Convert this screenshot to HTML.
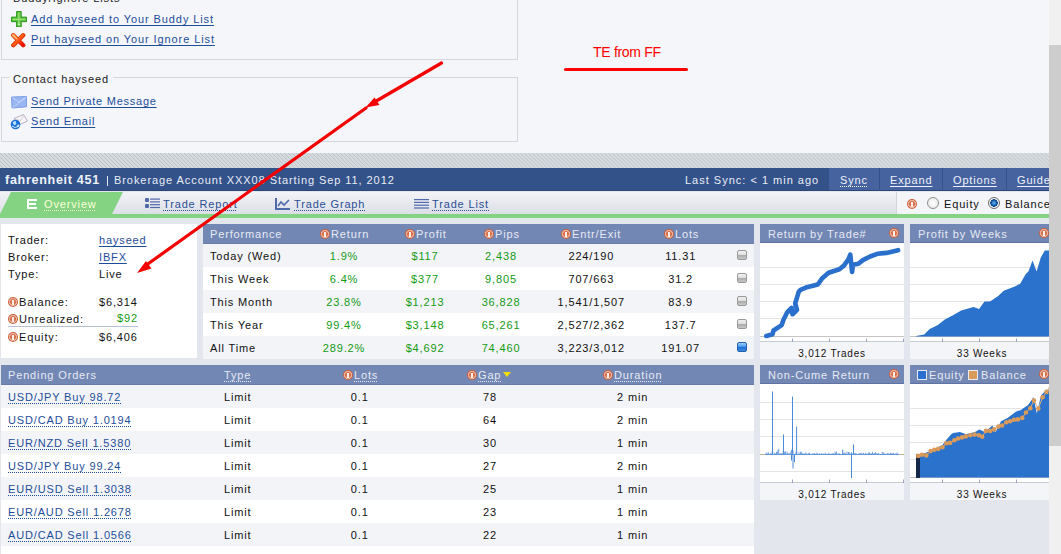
<!DOCTYPE html><html><head><meta charset="utf-8"><style>
*{margin:0;padding:0;box-sizing:border-box}
html,body{width:1061px;height:554px;overflow:hidden;background:#f5f6fa;font-family:"Liberation Sans",sans-serif;position:relative}
.a{position:absolute;white-space:nowrap}
.c{position:absolute;white-space:nowrap;transform:translateX(-50%)}
.lnk{color:#1e4e9a;text-decoration:underline;text-decoration-thickness:1px;text-underline-offset:1.5px;text-decoration-skip-ink:none}
.fs{position:absolute;border:1px solid #d3d7df}
.t11{font-size:11px;line-height:13px;letter-spacing:0.9px}
.t12{font-size:11px;line-height:13px;letter-spacing:0.85px}
.t10{font-size:10px;line-height:12px;letter-spacing:0.75px}
.dot{text-decoration:underline dotted;text-decoration-thickness:1px;text-underline-offset:2px;text-decoration-skip-ink:none}
.hdr{position:absolute;background:#7387b5;color:#e6eaf4}
.info{position:absolute;width:10px;height:10px;border-radius:50%;background:radial-gradient(circle,#d4704e 0,#d4704e 2.6px,#eab29c 3.2px,#eab29c 3.8px,#c9603c 4.4px)}
.info:after{content:"";position:absolute;left:4.2px;top:2.5px;width:1.6px;height:4.5px;background:#fbeee8}
.info:before{content:"";position:absolute;left:3.6px;top:6.5px;width:2.8px;height:1.6px;border-radius:1px;background:#fff}
.g{color:#139a13}
.k{color:#111}
</style></head><body>
<div class="fs" style="left:1px;top:-20px;width:517px;height:80px"></div>
<div id="buddy" class="a t11" style="left:9px;top:-8px;padding:0 4px;background:#f5f6fa;color:#222;">Buddy/Ignore Lists</div>
<div class="fs" style="left:1px;top:77px;width:517px;height:65px"></div>
<div id="contact" class="a t11" style="left:9px;top:73px;padding:0 4px;background:#f5f6fa;color:#222;">Contact hayseed</div>
<div id="l1" class="a t11 lnk" style="left:31px;top:13px">Add hayseed to Your Buddy List</div>
<div id="l2" class="a t11 lnk" style="left:31px;top:33px">Put hayseed on Your Ignore List</div>
<div id="l3" class="a t11 lnk" style="left:31px;top:95px;letter-spacing:0.75px">Send Private Message</div>
<div id="l4" class="a t11 lnk" style="left:31px;top:115px;letter-spacing:0.8px">Send Email</div>
<svg class="a" style="left:11px;top:11px" width="16" height="16" viewBox="0 0 16 16">
<path d="M5.6 0.5h4.6v5.6h5.3v4.6h-5.3v5.3h-4.6v-5.3H0.5v-4.6h5.1z" fill="#5cc43e" stroke="#2e961f" stroke-width="1"/>
<path d="M7.9 1.5v13M1.5 8.4h13" stroke="#9fe07e" stroke-width="1.2"/>
<rect x="7.2" y="12.6" width="1.5" height="1.5" fill="#e8ffd8"/></svg>
<svg class="a" style="left:10px;top:31.5px" width="16" height="16" viewBox="0 0 16 16">
<defs><linearGradient id="xg" x1="0" y1="0" x2="1" y2="1"><stop offset="0" stop-color="#ff9a40"/><stop offset="0.5" stop-color="#ff5a18"/><stop offset="1" stop-color="#f00000"/></linearGradient></defs>
<path d="M3.3 3.3L13.2 13.2M13.2 3.3L3.3 13.2" stroke="#d83000" stroke-width="4.4" stroke-linecap="round"/>
<path d="M3.3 3.3L13.2 13.2M13.2 3.3L3.3 13.2" stroke="url(#xg)" stroke-width="2.8" stroke-linecap="round"/>
<path d="M3 3L6.5 6.5" stroke="#ffc080" stroke-width="1.4" stroke-linecap="round"/></svg>
<svg class="a" style="left:11px;top:96px" width="16" height="13" viewBox="0 0 16 13">
<path d="M0.5 1L15.5 0.5V10.8L1 12Z" fill="#98b6f2" stroke="#7e9ee6" stroke-width="1"/>
<path d="M1.5 1.5L8 6L15 1M1.5 11.5L14.5 2" fill="none" stroke="#c4d6fa" stroke-width="0.9"/></svg>
<svg class="a" style="left:10px;top:113px" width="18" height="17" viewBox="0 0 18 17">
<path d="M4 5.5L13.5 1.5L17.5 8L8.5 12Z" fill="#f6f6f8" stroke="#b4a8b8" stroke-width="0.9"/>
<path d="M4.5 6L11 7.5L13.5 2" fill="none" stroke="#c8c0cc" stroke-width="0.7"/>
<circle cx="5.5" cy="11.5" r="4.8" fill="#1c6ed8"/>
<path d="M2.5 9.5q1.5-2 3.5-1.5q-1 1.5 0.5 2.5q-1 2-2.5 1.5zM7 12q1.5-1 2.5 0q-0.5 2-2 2.5z" fill="#bfe6ff"/>
<path d="M2 13q3 3 7 0" stroke="#d8f0ff" stroke-width="1" fill="none"/></svg>
<div id="te" class="a" style="left:593px;top:44px;font-size:14px;line-height:16px;color:#f00;letter-spacing:-0.3px">TE from FF</div>
<div class="a" style="left:564px;top:68px;width:124px;height:3px;background:#f00;border-radius:2px"></div>
<div class="a" style="left:0;top:153px;width:1061px;height:401px;background:#e4e6ed"></div>
<div class="a" style="left:0;top:153px;width:1061px;height:15px;background:repeating-linear-gradient(45deg,#d6dbe0 0px,#d6dbe0 1.6px,#b9c0c6 2.1px,#d6dbe0 2.83px)"></div>
<div class="a" style="left:0;top:168px;width:1061px;height:23px;background:#34528a;border-bottom:1px solid #2b4575"></div>
<div id="fh" class="a" style="left:5px;top:173px;font-size:12.5px;line-height:14px;font-weight:bold;color:#eef2fa;letter-spacing:0.72px">fahrenheit 451</div>
<div class="a" style="left:107px;top:176px;width:1px;height:10px;background:#dfe6f4"></div>
<div id="brk" class="a t12" style="left:114px;top:174px;color:#e8edf7;letter-spacing:0.93px">Brokerage Account XXX08 Starting Sep 11, 2012</div>
<div id="sync0" class="a t12" style="left:685px;top:174px;color:#e8edf7;letter-spacing:1.0px">Last Sync: &lt; 1 min ago</div>
<div class="a" style="left:829px;top:168px;width:220px;height:23px;background:#4663a0;border-bottom:1px solid #2b4575"></div>
<div class="a" style="left:879px;top:168px;width:1px;height:23px;background:#34528a"></div>
<div class="a" style="left:942px;top:168px;width:1px;height:23px;background:#34528a"></div>
<div class="a" style="left:1006px;top:168px;width:1px;height:23px;background:#34528a"></div>
<div id="syncb" class="a t12 dot" style="left:840px;top:174px;color:#eef2fa">Sync</div>
<div id="exp" class="a t12" style="left:890px;top:174px;color:#eef2fa;text-decoration:underline;text-underline-offset:2px">Expand</div>
<div id="opt" class="a t12" style="left:953px;top:174px;color:#eef2fa;text-decoration:underline;text-underline-offset:2px">Options</div>
<div id="gui" class="a t12" style="left:1017px;top:174px;color:#eef2fa;text-decoration:underline;text-underline-offset:2px">Guide</div>
<div class="a" style="left:0;top:192px;width:1061px;height:22px;background:linear-gradient(#f2f3f7,#dcdfe7)"></div>
<svg class="a" style="left:0;top:192px" width="130" height="22"><path d="M11 0H123L112 22H0Z" fill="#83d383"/></svg>
<div class="a" style="left:0;top:214px;width:1061px;height:4px;background:#83d383"></div>
<svg class="a" style="left:27px;top:199px" width="11" height="10"><path d="M0 0h10v2H2v2h7v2H2v2h8v2H0z" fill="#fff"/></svg>
<div id="ov" class="a t12 dot" style="left:44px;top:198px;color:#fbffd6">Overview</div>
<svg class="a" style="left:145px;top:198px" width="15" height="11"><g fill="#5069a8"><rect x="0" y="0" width="4" height="4" rx="1"/><rect x="0" y="6" width="4" height="4" rx="1"/>
<rect x="5" y="0.5" width="10" height="1.2"/><rect x="5" y="3.3" width="10" height="1.2"/><rect x="5" y="6.1" width="10" height="1.2"/><rect x="5" y="8.9" width="10" height="1.2"/></g></svg>
<div id="tr" class="a t12 dot" style="left:163px;top:198px;color:#2a4d94">Trade Report</div>
<svg class="a" style="left:275px;top:198px" width="16" height="12"><path d="M1 0V11H15" fill="none" stroke="#5069a8" stroke-width="2"/><path d="M3 8L6 4L9 7L14 2" fill="none" stroke="#5069a8" stroke-width="1.6"/></svg>
<div id="tg" class="a t12 dot" style="left:294px;top:198px;color:#2a4d94">Trade Graph</div>
<svg class="a" style="left:414px;top:199px" width="15" height="10"><g fill="#5069a8"><rect x="0" y="0" width="15" height="1.2"/><rect x="0" y="2.8" width="15" height="1.2"/><rect x="0" y="5.6" width="15" height="1.2"/><rect x="0" y="8.4" width="15" height="1.2"/></g></svg>
<div id="tl" class="a t12 dot" style="left:432px;top:198px;color:#2a4d94">Trade List</div>
<div class="a" style="left:896px;top:192px;width:165px;height:22px;background:#f4f5f9;border-left:1px solid #d0d4dd"></div>
<div class="info" style="left:907px;top:199px"></div>
<div class="a" style="left:927px;top:197px;width:12px;height:12px;border-radius:50%;border:1px solid #8e8e8e;background:radial-gradient(#fff,#e4e4e4)"></div>
<div id="eq" class="a t12" style="left:944px;top:198px;color:#111">Equity</div>
<div class="a" style="left:988px;top:197px;width:12px;height:12px;border-radius:50%;border:1px solid #6b6b6b;background:radial-gradient(circle,#6fb8f2 0,#1460b0 2.5px,#0a3e80 3.5px,#fff 4px,#e4e4e4 6px)"></div>
<div id="bal" class="a t12" style="left:1005px;top:198px;color:#111">Balance</div>
<div class="a" style="left:1px;top:224px;width:196px;height:134px;background:#fff"></div>
<div id="trd" class="a t12 k" style="left:8px;top:234px;">Trader:</div>
<div id="hay" class="a t12 lnk" style="left:99px;top:234px;">hayseed</div>
<div id="brkr" class="a t12 k" style="left:8px;top:251px;">Broker:</div>
<div id="ibfx" class="a t12 lnk" style="left:99px;top:251px;">IBFX</div>
<div id="typ" class="a t12 k" style="left:8px;top:268px;">Type:</div>
<div id="live" class="a t12 k" style="left:99px;top:268px;">Live</div>
<div class="info" style="left:8px;top:297px"></div>
<div id="balc" class="a t12 k" style="left:19px;top:296px;">Balance:</div>
<div id="b1" class="a t12 k" style="left:99px;top:296px;">$6,314</div>
<div class="info" style="left:8px;top:314px"></div>
<div id="unr" class="a t12 k" style="left:19px;top:313px;">Unrealized:</div>
<div id="b2" class="a t12 g" style="left:96px;width:42px;text-align:right;top:312px">$92</div>
<div class="a" style="left:8px;top:326px;width:130px;height:1px;background:#b7c0d6"></div>
<div class="info" style="left:8px;top:332px"></div>
<div id="eqc" class="a t12 k" style="left:19px;top:331px;">Equity:</div>
<div id="b3" class="a t12 k" style="left:99px;top:331px;">$6,406</div>
<div class="hdr" style="left:203px;top:224px;width:551px;height:20px;border-bottom:1px solid #6a7cab"></div>
<div id="perf" class="a t12" style="left:210px;top:228px;color:#e6eaf4">Performance</div>
<div class="info" style="left:320px;top:229px"></div>
<div id="ph0" class="a t12" style="left:331px;top:228px;color:#e6eaf4">Return</div>
<div class="info" style="left:405px;top:229px"></div>
<div id="ph1" class="a t12" style="left:416px;top:228px;color:#e6eaf4">Profit</div>
<div class="info" style="left:484px;top:229px"></div>
<div id="ph2" class="a t12" style="left:495px;top:228px;color:#e6eaf4">Pips</div>
<div class="info" style="left:561px;top:229px"></div>
<div id="ph3" class="a t12" style="left:572px;top:228px;color:#e6eaf4">Entr/Exit</div>
<div class="info" style="left:664px;top:229px"></div>
<div id="ph4" class="a t12" style="left:675px;top:228px;color:#e6eaf4">Lots</div>
<div class="a" style="left:203px;top:244px;width:551px;height:23px;background:#f3f4f8"></div>
<div id="pr0" class="a t12 k" style="left:210px;top:250px;">Today (Wed)</div>
<div id="pc00" class="c t12 g" style="left:344px;top:250px">1.9%</div>
<div id="pc01" class="c t12 g" style="left:425px;top:250px">$117</div>
<div id="pc02" class="c t12 g" style="left:501px;top:250px">2,438</div>
<div id="pc03" class="c t12 k" style="left:591.3px;top:250px">224/190</div>
<div id="pc04" class="c t12 k" style="left:680.7px;top:250px">11.31</div>
<div class="a" style="left:737px;top:250px;width:10px;height:10px;border:1px solid #9a9a9a;border-radius:2px;background:linear-gradient(#f0f0f0 0,#e0e0e0 45%,#a8a8a8 50%,#c8c8c8 100%)"></div>
<div class="a" style="left:203px;top:267px;width:551px;height:23px;background:#ffffff"></div>
<div id="pr1" class="a t12 k" style="left:210px;top:273px;">This Week</div>
<div id="pc10" class="c t12 g" style="left:344px;top:273px">6.4%</div>
<div id="pc11" class="c t12 g" style="left:425px;top:273px">$377</div>
<div id="pc12" class="c t12 g" style="left:501px;top:273px">9,805</div>
<div id="pc13" class="c t12 k" style="left:591.3px;top:273px">707/663</div>
<div id="pc14" class="c t12 k" style="left:680.7px;top:273px">31.2</div>
<div class="a" style="left:737px;top:273px;width:10px;height:10px;border:1px solid #9a9a9a;border-radius:2px;background:linear-gradient(#f0f0f0 0,#e0e0e0 45%,#a8a8a8 50%,#c8c8c8 100%)"></div>
<div class="a" style="left:203px;top:290px;width:551px;height:23px;background:#f3f4f8"></div>
<div id="pr2" class="a t12 k" style="left:210px;top:296px;">This Month</div>
<div id="pc20" class="c t12 g" style="left:344px;top:296px">23.8%</div>
<div id="pc21" class="c t12 g" style="left:425px;top:296px">$1,213</div>
<div id="pc22" class="c t12 g" style="left:501px;top:296px">36,828</div>
<div id="pc23" class="c t12 k" style="left:591.3px;top:296px">1,541/1,507</div>
<div id="pc24" class="c t12 k" style="left:680.7px;top:296px">83.9</div>
<div class="a" style="left:737px;top:296px;width:10px;height:10px;border:1px solid #9a9a9a;border-radius:2px;background:linear-gradient(#f0f0f0 0,#e0e0e0 45%,#a8a8a8 50%,#c8c8c8 100%)"></div>
<div class="a" style="left:203px;top:313px;width:551px;height:23px;background:#ffffff"></div>
<div id="pr3" class="a t12 k" style="left:210px;top:319px;">This Year</div>
<div id="pc30" class="c t12 g" style="left:344px;top:319px">99.4%</div>
<div id="pc31" class="c t12 g" style="left:425px;top:319px">$3,148</div>
<div id="pc32" class="c t12 g" style="left:501px;top:319px">65,261</div>
<div id="pc33" class="c t12 k" style="left:591.3px;top:319px">2,527/2,362</div>
<div id="pc34" class="c t12 k" style="left:680.7px;top:319px">137.7</div>
<div class="a" style="left:737px;top:319px;width:10px;height:10px;border:1px solid #9a9a9a;border-radius:2px;background:linear-gradient(#f0f0f0 0,#e0e0e0 45%,#a8a8a8 50%,#c8c8c8 100%)"></div>
<div class="a" style="left:203px;top:336px;width:551px;height:23px;background:#f3f4f8"></div>
<div id="pr4" class="a t12 k" style="left:210px;top:342px;">All Time</div>
<div id="pc40" class="c t12 g" style="left:344px;top:342px">289.2%</div>
<div id="pc41" class="c t12 g" style="left:425px;top:342px">$4,692</div>
<div id="pc42" class="c t12 g" style="left:501px;top:342px">74,460</div>
<div id="pc43" class="c t12 k" style="left:591.3px;top:342px">3,223/3,012</div>
<div id="pc44" class="c t12 k" style="left:680.7px;top:342px">191.07</div>
<div class="a" style="left:737px;top:342px;width:10px;height:10px;border:1px solid #2560b0;border-radius:2px;background:linear-gradient(#9fd0ff 0,#4a98ee 45%,#1c6cd0 50%,#3a8ae0 100%)"></div>
<div class="hdr" style="left:1px;top:365px;width:753px;height:20px;border-bottom:1px solid #6a7cab"></div>
<div id="pend" class="a t12" style="left:8px;top:369px;color:#e6eaf4">Pending Orders</div>
<div id="ptype" class="a t12 dot" style="left:224px;top:369px;color:#e6eaf4">Type</div>
<div class="info" style="left:343px;top:370px"></div>
<div id="plots" class="a t12 dot" style="left:354px;top:369px;color:#e6eaf4">Lots</div>
<div class="info" style="left:467px;top:370px"></div>
<div id="pgap" class="a t12 dot" style="left:478px;top:369px;color:#e6eaf4">Gap</div>
<svg class="a" style="left:503px;top:372px" width="8" height="5"><path d="M0 0H8L4 5Z" fill="#f0e000"/></svg>
<div class="info" style="left:603px;top:370px"></div>
<div id="pdur" class="a t12 dot" style="left:614px;top:369px;color:#e6eaf4">Duration</div>
<div class="a" style="left:1px;top:385px;width:753px;height:23px;background:#f3f4f8"></div>
<div id="po0" class="a t12 dot" style="left:8px;top:391px;color:#1e4e9a">USD/JPY Buy 98.72</div>
<div id="pl0" class="a t12 k" style="left:224px;top:391px;">Limit</div>
<div id="pq0" class="c t12 k" style="left:359.7px;top:391px">0.1</div>
<div id="pg0" class="c t12 k" style="left:489.9px;top:391px">78</div>
<div id="pd0" class="c t12 k" style="left:632.6px;top:391px">2 min</div>
<div class="a" style="left:1px;top:408px;width:753px;height:23px;background:#ffffff"></div>
<div id="po1" class="a t12 dot" style="left:8px;top:414px;color:#1e4e9a">USD/CAD Buy 1.0194</div>
<div id="pl1" class="a t12 k" style="left:224px;top:414px;">Limit</div>
<div id="pq1" class="c t12 k" style="left:359.7px;top:414px">0.1</div>
<div id="pg1" class="c t12 k" style="left:489.9px;top:414px">64</div>
<div id="pd1" class="c t12 k" style="left:632.6px;top:414px">2 min</div>
<div class="a" style="left:1px;top:431px;width:753px;height:23px;background:#f3f4f8"></div>
<div id="po2" class="a t12 dot" style="left:8px;top:437px;color:#1e4e9a">EUR/NZD Sell 1.5380</div>
<div id="pl2" class="a t12 k" style="left:224px;top:437px;">Limit</div>
<div id="pq2" class="c t12 k" style="left:359.7px;top:437px">0.1</div>
<div id="pg2" class="c t12 k" style="left:489.9px;top:437px">30</div>
<div id="pd2" class="c t12 k" style="left:632.6px;top:437px">1 min</div>
<div class="a" style="left:1px;top:454px;width:753px;height:23px;background:#ffffff"></div>
<div id="po3" class="a t12 dot" style="left:8px;top:460px;color:#1e4e9a">USD/JPY Buy 99.24</div>
<div id="pl3" class="a t12 k" style="left:224px;top:460px;">Limit</div>
<div id="pq3" class="c t12 k" style="left:359.7px;top:460px">0.1</div>
<div id="pg3" class="c t12 k" style="left:489.9px;top:460px">27</div>
<div id="pd3" class="c t12 k" style="left:632.6px;top:460px">2 min</div>
<div class="a" style="left:1px;top:477px;width:753px;height:23px;background:#f3f4f8"></div>
<div id="po4" class="a t12 dot" style="left:8px;top:483px;color:#1e4e9a">EUR/USD Sell 1.3038</div>
<div id="pl4" class="a t12 k" style="left:224px;top:483px;">Limit</div>
<div id="pq4" class="c t12 k" style="left:359.7px;top:483px">0.1</div>
<div id="pg4" class="c t12 k" style="left:489.9px;top:483px">25</div>
<div id="pd4" class="c t12 k" style="left:632.6px;top:483px">1 min</div>
<div class="a" style="left:1px;top:500px;width:753px;height:23px;background:#ffffff"></div>
<div id="po5" class="a t12 dot" style="left:8px;top:506px;color:#1e4e9a">EUR/AUD Sell 1.2678</div>
<div id="pl5" class="a t12 k" style="left:224px;top:506px;">Limit</div>
<div id="pq5" class="c t12 k" style="left:359.7px;top:506px">0.1</div>
<div id="pg5" class="c t12 k" style="left:489.9px;top:506px">23</div>
<div id="pd5" class="c t12 k" style="left:632.6px;top:506px">1 min</div>
<div class="a" style="left:1px;top:523px;width:753px;height:23px;background:#f3f4f8"></div>
<div id="po6" class="a t12 dot" style="left:8px;top:529px;color:#1e4e9a">AUD/CAD Sell 1.0566</div>
<div id="pl6" class="a t12 k" style="left:224px;top:529px;">Limit</div>
<div id="pq6" class="c t12 k" style="left:359.7px;top:529px">0.1</div>
<div id="pg6" class="c t12 k" style="left:489.9px;top:529px">22</div>
<div id="pd6" class="c t12 k" style="left:632.6px;top:529px">1 min</div>
<div class="a" style="left:1px;top:546px;width:753px;height:23px;background:#ffffff"></div>
<div id="po7" class="a t12 dot" style="left:8px;top:552px;color:#1e4e9a">GBP/USD Sell 1.5312</div>
<div id="pl7" class="a t12 k" style="left:224px;top:552px;">Limit</div>
<div id="pq7" class="c t12 k" style="left:359.7px;top:552px">0.1</div>
<div id="pg7" class="c t12 k" style="left:489.9px;top:552px">21</div>
<div id="pd7" class="c t12 k" style="left:632.6px;top:552px">1 min</div>
<div class="hdr" style="left:760px;top:224px;width:144px;height:19px;border-bottom:1px solid #5f72a3"></div>
<div id="ct760224" class="a t12" style="left:768px;top:228px;color:#e6eaf4">Return by Trade#</div>
<div class="info" style="left:889px;top:228px"></div>
<div class="a" style="left:760px;top:243px;width:144px;height:99px;background:#fff"></div>
<svg class="a" style="left:760px;top:243px" width="144" height="99"><line x1="0" x2="144" y1="24.5" y2="24.5" stroke="#e4e4e4" stroke-width="1"/><line x1="0" x2="144" y1="41.5" y2="41.5" stroke="#e4e4e4" stroke-width="1"/><line x1="0" x2="144" y1="58.5" y2="58.5" stroke="#e4e4e4" stroke-width="1"/><line x1="0" x2="144" y1="75.5" y2="75.5" stroke="#e4e4e4" stroke-width="1"/><line x1="0" x2="144" y1="93.5" y2="93.5" stroke="#c4c4c4" stroke-width="1"/><line x1="0" x2="144" y1="98.5" y2="98.5" stroke="#c6cad4" stroke-width="1"/><line x1="32.5" x2="32.5" y1="95.5" y2="99" stroke="#9aa6c0" stroke-width="1"/><line x1="69.5" x2="69.5" y1="95.5" y2="99" stroke="#9aa6c0" stroke-width="1"/><line x1="106.5" x2="106.5" y1="95.5" y2="99" stroke="#9aa6c0" stroke-width="1"/><line x1="143.5" x2="143.5" y1="95.5" y2="99" stroke="#9aa6c0" stroke-width="1"/><path d="M6.3 93.0 L12.6 91.2 L13.5 87.5 L21.7 82.1 L23.5 76.7 L27.1 69.5 L31.6 65.0 L32.5 71.3 L37.0 66.8 L35.2 60.5 L38.8 48.7 L40.6 46.9 L46.9 44.2 L57.8 41.5 L62.3 35.2 L68.6 29.8 L79.4 26.2 L83.9 22.6 L88.4 16.2 L90.3 11.7 L92.1 28.9 L93.0 21.7 L98.4 20.8 L102.9 17.1 L110.1 13.5 L117.3 10.8 L126.4 9.9 L138.1 7.2" fill="none" stroke="#2a6fcc" stroke-width="4.6" stroke-linejoin="round" stroke-linecap="round"/></svg>
<div class="a" style="left:760px;top:342px;width:144px;height:17px;background:#f4f5f9"></div>
<div id="cf760224" class="c t10 k" style="left:832px;top:348px">3,012 Trades</div>
<div class="hdr" style="left:910px;top:224px;width:144px;height:19px;border-bottom:1px solid #5f72a3"></div>
<div id="ct910224" class="a t12" style="left:918px;top:228px;color:#e6eaf4">Profit by Weeks</div>
<div class="info" style="left:1039px;top:228px"></div>
<div class="a" style="left:910px;top:243px;width:144px;height:99px;background:#fff"></div>
<svg class="a" style="left:910px;top:243px" width="144" height="99"><line x1="0" x2="144" y1="24.5" y2="24.5" stroke="#e4e4e4" stroke-width="1"/><line x1="0" x2="144" y1="41.5" y2="41.5" stroke="#e4e4e4" stroke-width="1"/><line x1="0" x2="144" y1="58.5" y2="58.5" stroke="#e4e4e4" stroke-width="1"/><line x1="0" x2="144" y1="75.5" y2="75.5" stroke="#e4e4e4" stroke-width="1"/><line x1="0" x2="144" y1="93.5" y2="93.5" stroke="#c4c4c4" stroke-width="1"/><line x1="0" x2="144" y1="98.5" y2="98.5" stroke="#c6cad4" stroke-width="1"/><line x1="32.5" x2="32.5" y1="95.5" y2="99" stroke="#9aa6c0" stroke-width="1"/><line x1="69.5" x2="69.5" y1="95.5" y2="99" stroke="#9aa6c0" stroke-width="1"/><line x1="106.5" x2="106.5" y1="95.5" y2="99" stroke="#9aa6c0" stroke-width="1"/><line x1="143.5" x2="143.5" y1="95.5" y2="99" stroke="#9aa6c0" stroke-width="1"/><path d="M6 93.5 L6.0 92.9 L14.2 91.5 L19.7 86.0 L27.9 81.9 L34.8 76.5 L43.0 72.3 L51.2 67.4 L63.5 64.1 L69.0 66.0 L74.5 58.6 L80.0 58.6 L88.2 53.1 L93.7 47.7 L104.7 43.5 L110.2 40.8 L115.6 31.2 L118.4 28.5 L122.5 17.5 L126.6 28.5 L130.7 14.8 L134.8 7.4 L144.0 7.4 L144 93.5Z" fill="#2a72cc"/></svg>
<div class="a" style="left:910px;top:342px;width:144px;height:17px;background:#f4f5f9"></div>
<div id="cf910224" class="c t10 k" style="left:982px;top:348px">33 Weeks</div>
<div class="hdr" style="left:760px;top:365px;width:144px;height:19px;border-bottom:1px solid #5f72a3"></div>
<div id="ct760365" class="a t12" style="left:768px;top:369px;color:#e6eaf4">Non-Cume Return</div>
<div class="info" style="left:889px;top:369px"></div>
<div class="a" style="left:760px;top:384px;width:144px;height:99px;background:#fff"></div>
<svg class="a" style="left:760px;top:384px" width="144" height="99"><line x1="0" x2="144" y1="18.5" y2="18.5" stroke="#e4e4e4" stroke-width="1"/><line x1="0" x2="144" y1="35.5" y2="35.5" stroke="#e4e4e4" stroke-width="1"/><line x1="0" x2="144" y1="52.5" y2="52.5" stroke="#e4e4e4" stroke-width="1"/><line x1="0" x2="144" y1="87.5" y2="87.5" stroke="#e4e4e4" stroke-width="1"/><line x1="0" x2="144" y1="98.5" y2="98.5" stroke="#c6cad4" stroke-width="1"/><line x1="32.5" x2="32.5" y1="95.5" y2="99" stroke="#9aa6c0" stroke-width="1"/><line x1="69.5" x2="69.5" y1="95.5" y2="99" stroke="#9aa6c0" stroke-width="1"/><line x1="106.5" x2="106.5" y1="95.5" y2="99" stroke="#9aa6c0" stroke-width="1"/><line x1="143.5" x2="143.5" y1="95.5" y2="99" stroke="#9aa6c0" stroke-width="1"/><line x1="0" x2="144" y1="70.5" y2="70.5" stroke="#b4ae9e" stroke-width="1"/><line x1="6" x2="139" y1="70.5" y2="70.5" stroke="#6a9ce0" stroke-width="1"/><line x1="12.5" x2="12.5" y1="70.5" y2="7.5" stroke="#4a8ad8" stroke-width="1"/><line x1="23.5" x2="23.5" y1="70.5" y2="50.5" stroke="#4a8ad8" stroke-width="1"/><line x1="32.5" x2="32.5" y1="70.5" y2="12.5" stroke="#4a8ad8" stroke-width="1"/><line x1="36.6" x2="36.6" y1="70.5" y2="42.5" stroke="#4a8ad8" stroke-width="1"/><line x1="82.7" x2="82.7" y1="70.5" y2="65.5" stroke="#4a8ad8" stroke-width="1"/><line x1="93.5" x2="93.5" y1="70.5" y2="60.5" stroke="#4a8ad8" stroke-width="1"/><line x1="33" x2="33" y1="70.5" y2="84.5" stroke="#4a8ad8" stroke-width="1"/><line x1="91.5" x2="91.5" y1="70.5" y2="94.0" stroke="#4a8ad8" stroke-width="1"/><line x1="34.5" x2="34.5" y1="70.5" y2="78.0" stroke="#4a8ad8" stroke-width="1"/><line x1="31.5" x2="31.5" y1="70.5" y2="76.5" stroke="#4a8ad8" stroke-width="1"/><line x1="6.00" x2="6.00" y1="70.5" y2="68.9" stroke="#5a8fdc" stroke-width="0.8"/><line x1="6.75" x2="6.75" y1="70.5" y2="68.7" stroke="#5a8fdc" stroke-width="0.8"/><line x1="7.50" x2="7.50" y1="70.5" y2="70.4" stroke="#5a8fdc" stroke-width="0.8"/><line x1="8.25" x2="8.25" y1="70.5" y2="68.0" stroke="#5a8fdc" stroke-width="0.8"/><line x1="9.00" x2="9.00" y1="70.5" y2="69.8" stroke="#5a8fdc" stroke-width="0.8"/><line x1="9.75" x2="9.75" y1="70.5" y2="69.8" stroke="#5a8fdc" stroke-width="0.8"/><line x1="10.50" x2="10.50" y1="70.5" y2="69.1" stroke="#5a8fdc" stroke-width="0.8"/><line x1="11.25" x2="11.25" y1="70.5" y2="70.0" stroke="#5a8fdc" stroke-width="0.8"/><line x1="12.00" x2="12.00" y1="70.5" y2="67.9" stroke="#5a8fdc" stroke-width="0.8"/><line x1="12.75" x2="12.75" y1="70.5" y2="68.3" stroke="#5a8fdc" stroke-width="0.8"/><line x1="13.50" x2="13.50" y1="70.5" y2="70.3" stroke="#5a8fdc" stroke-width="0.8"/><line x1="14.25" x2="14.25" y1="70.5" y2="68.7" stroke="#5a8fdc" stroke-width="0.8"/><line x1="15.00" x2="15.00" y1="70.5" y2="70.3" stroke="#5a8fdc" stroke-width="0.8"/><line x1="15.75" x2="15.75" y1="70.5" y2="69.1" stroke="#5a8fdc" stroke-width="0.8"/><line x1="16.50" x2="16.50" y1="70.5" y2="67.9" stroke="#5a8fdc" stroke-width="0.8"/><line x1="17.25" x2="17.25" y1="70.5" y2="67.7" stroke="#5a8fdc" stroke-width="0.8"/><line x1="18.00" x2="18.00" y1="70.5" y2="65.7" stroke="#5a8fdc" stroke-width="0.8"/><line x1="18.75" x2="18.75" y1="70.5" y2="64.9" stroke="#5a8fdc" stroke-width="0.8"/><line x1="19.50" x2="19.50" y1="70.5" y2="70.2" stroke="#5a8fdc" stroke-width="0.8"/><line x1="20.25" x2="20.25" y1="70.5" y2="69.2" stroke="#5a8fdc" stroke-width="0.8"/><line x1="21.00" x2="21.00" y1="70.5" y2="69.2" stroke="#5a8fdc" stroke-width="0.8"/><line x1="21.75" x2="21.75" y1="70.5" y2="69.6" stroke="#5a8fdc" stroke-width="0.8"/><line x1="22.50" x2="22.50" y1="70.5" y2="69.3" stroke="#5a8fdc" stroke-width="0.8"/><line x1="23.25" x2="23.25" y1="70.5" y2="67.0" stroke="#5a8fdc" stroke-width="0.8"/><line x1="24.00" x2="24.00" y1="70.5" y2="67.8" stroke="#5a8fdc" stroke-width="0.8"/><line x1="24.75" x2="24.75" y1="70.5" y2="67.7" stroke="#5a8fdc" stroke-width="0.8"/><line x1="25.50" x2="25.50" y1="70.5" y2="67.5" stroke="#5a8fdc" stroke-width="0.8"/><line x1="26.25" x2="26.25" y1="70.5" y2="70.0" stroke="#5a8fdc" stroke-width="0.8"/><line x1="27.00" x2="27.00" y1="70.5" y2="67.6" stroke="#5a8fdc" stroke-width="0.8"/><line x1="27.75" x2="27.75" y1="70.5" y2="68.8" stroke="#5a8fdc" stroke-width="0.8"/><line x1="28.50" x2="28.50" y1="70.5" y2="69.9" stroke="#5a8fdc" stroke-width="0.8"/><line x1="29.25" x2="29.25" y1="70.5" y2="68.8" stroke="#5a8fdc" stroke-width="0.8"/><line x1="30.00" x2="30.00" y1="70.5" y2="70.1" stroke="#5a8fdc" stroke-width="0.8"/><line x1="30.75" x2="30.75" y1="70.5" y2="67.5" stroke="#5a8fdc" stroke-width="0.8"/><line x1="31.50" x2="31.50" y1="70.5" y2="65.7" stroke="#5a8fdc" stroke-width="0.8"/><line x1="32.25" x2="32.25" y1="70.5" y2="69.6" stroke="#5a8fdc" stroke-width="0.8"/><line x1="33.00" x2="33.00" y1="70.5" y2="65.9" stroke="#5a8fdc" stroke-width="0.8"/><line x1="33.75" x2="33.75" y1="70.5" y2="70.4" stroke="#5a8fdc" stroke-width="0.8"/><line x1="34.50" x2="34.50" y1="70.5" y2="70.4" stroke="#5a8fdc" stroke-width="0.8"/><line x1="35.25" x2="35.25" y1="70.5" y2="69.5" stroke="#5a8fdc" stroke-width="0.8"/><line x1="36.00" x2="36.00" y1="70.5" y2="67.6" stroke="#5a8fdc" stroke-width="0.8"/><line x1="36.75" x2="36.75" y1="70.5" y2="67.5" stroke="#5a8fdc" stroke-width="0.8"/><line x1="37.50" x2="37.50" y1="70.5" y2="70.0" stroke="#5a8fdc" stroke-width="0.8"/><line x1="38.25" x2="38.25" y1="70.5" y2="70.4" stroke="#5a8fdc" stroke-width="0.8"/><line x1="39.00" x2="39.00" y1="70.5" y2="68.1" stroke="#5a8fdc" stroke-width="0.8"/><line x1="39.75" x2="39.75" y1="70.5" y2="70.0" stroke="#5a8fdc" stroke-width="0.8"/><line x1="40.50" x2="40.50" y1="70.5" y2="67.9" stroke="#5a8fdc" stroke-width="0.8"/><line x1="41.25" x2="41.25" y1="70.5" y2="67.6" stroke="#5a8fdc" stroke-width="0.8"/><line x1="42.00" x2="42.00" y1="70.5" y2="69.9" stroke="#5a8fdc" stroke-width="0.8"/><line x1="42.75" x2="42.75" y1="70.5" y2="68.9" stroke="#5a8fdc" stroke-width="0.8"/><line x1="43.50" x2="43.50" y1="70.5" y2="69.6" stroke="#5a8fdc" stroke-width="0.8"/><line x1="44.25" x2="44.25" y1="70.5" y2="69.6" stroke="#5a8fdc" stroke-width="0.8"/><line x1="45.00" x2="45.00" y1="70.5" y2="69.7" stroke="#5a8fdc" stroke-width="0.8"/><line x1="45.75" x2="45.75" y1="70.5" y2="68.3" stroke="#5a8fdc" stroke-width="0.8"/><line x1="46.50" x2="46.50" y1="70.5" y2="69.6" stroke="#5a8fdc" stroke-width="0.8"/><line x1="47.25" x2="47.25" y1="70.5" y2="69.7" stroke="#5a8fdc" stroke-width="0.8"/><line x1="48.00" x2="48.00" y1="70.5" y2="70.5" stroke="#5a8fdc" stroke-width="0.8"/><line x1="48.75" x2="48.75" y1="70.5" y2="68.8" stroke="#5a8fdc" stroke-width="0.8"/><line x1="49.50" x2="49.50" y1="70.5" y2="68.7" stroke="#5a8fdc" stroke-width="0.8"/><line x1="50.25" x2="50.25" y1="70.5" y2="70.4" stroke="#5a8fdc" stroke-width="0.8"/><line x1="51.00" x2="51.00" y1="70.5" y2="69.8" stroke="#5a8fdc" stroke-width="0.8"/><line x1="51.75" x2="51.75" y1="70.5" y2="70.0" stroke="#5a8fdc" stroke-width="0.8"/><line x1="52.50" x2="52.50" y1="70.5" y2="69.4" stroke="#5a8fdc" stroke-width="0.8"/><line x1="53.25" x2="53.25" y1="70.5" y2="70.3" stroke="#5a8fdc" stroke-width="0.8"/><line x1="54.00" x2="54.00" y1="70.5" y2="69.1" stroke="#5a8fdc" stroke-width="0.8"/><line x1="54.75" x2="54.75" y1="70.5" y2="69.1" stroke="#5a8fdc" stroke-width="0.8"/><line x1="55.50" x2="55.50" y1="70.5" y2="70.0" stroke="#5a8fdc" stroke-width="0.8"/><line x1="56.25" x2="56.25" y1="70.5" y2="69.6" stroke="#5a8fdc" stroke-width="0.8"/><line x1="57.00" x2="57.00" y1="70.5" y2="68.7" stroke="#5a8fdc" stroke-width="0.8"/><line x1="57.75" x2="57.75" y1="70.5" y2="69.4" stroke="#5a8fdc" stroke-width="0.8"/><line x1="58.50" x2="58.50" y1="70.5" y2="70.5" stroke="#5a8fdc" stroke-width="0.8"/><line x1="59.25" x2="59.25" y1="70.5" y2="69.4" stroke="#5a8fdc" stroke-width="0.8"/><line x1="60.00" x2="60.00" y1="70.5" y2="69.8" stroke="#5a8fdc" stroke-width="0.8"/><line x1="60.75" x2="60.75" y1="70.5" y2="70.1" stroke="#5a8fdc" stroke-width="0.8"/><line x1="61.50" x2="61.50" y1="70.5" y2="69.2" stroke="#5a8fdc" stroke-width="0.8"/><line x1="62.25" x2="62.25" y1="70.5" y2="70.3" stroke="#5a8fdc" stroke-width="0.8"/><line x1="63.00" x2="63.00" y1="70.5" y2="69.5" stroke="#5a8fdc" stroke-width="0.8"/><line x1="63.75" x2="63.75" y1="70.5" y2="69.8" stroke="#5a8fdc" stroke-width="0.8"/><line x1="64.50" x2="64.50" y1="70.5" y2="70.2" stroke="#5a8fdc" stroke-width="0.8"/><line x1="65.25" x2="65.25" y1="70.5" y2="68.5" stroke="#5a8fdc" stroke-width="0.8"/><line x1="66.00" x2="66.00" y1="70.5" y2="69.8" stroke="#5a8fdc" stroke-width="0.8"/><line x1="66.75" x2="66.75" y1="70.5" y2="70.1" stroke="#5a8fdc" stroke-width="0.8"/><line x1="67.50" x2="67.50" y1="70.5" y2="70.2" stroke="#5a8fdc" stroke-width="0.8"/><line x1="68.25" x2="68.25" y1="70.5" y2="69.2" stroke="#5a8fdc" stroke-width="0.8"/><line x1="69.00" x2="69.00" y1="70.5" y2="69.7" stroke="#5a8fdc" stroke-width="0.8"/><line x1="69.75" x2="69.75" y1="70.5" y2="69.5" stroke="#5a8fdc" stroke-width="0.8"/><line x1="70.50" x2="70.50" y1="70.5" y2="70.0" stroke="#5a8fdc" stroke-width="0.8"/><line x1="71.25" x2="71.25" y1="70.5" y2="69.6" stroke="#5a8fdc" stroke-width="0.8"/><line x1="72.00" x2="72.00" y1="70.5" y2="70.1" stroke="#5a8fdc" stroke-width="0.8"/><line x1="72.75" x2="72.75" y1="70.5" y2="69.2" stroke="#5a8fdc" stroke-width="0.8"/><line x1="73.50" x2="73.50" y1="70.5" y2="69.3" stroke="#5a8fdc" stroke-width="0.8"/><line x1="74.25" x2="74.25" y1="70.5" y2="70.3" stroke="#5a8fdc" stroke-width="0.8"/><line x1="75.00" x2="75.00" y1="70.5" y2="67.7" stroke="#5a8fdc" stroke-width="0.8"/><line x1="75.75" x2="75.75" y1="70.5" y2="69.0" stroke="#5a8fdc" stroke-width="0.8"/><line x1="76.50" x2="76.50" y1="70.5" y2="67.6" stroke="#5a8fdc" stroke-width="0.8"/><line x1="77.25" x2="77.25" y1="70.5" y2="70.2" stroke="#5a8fdc" stroke-width="0.8"/><line x1="78.00" x2="78.00" y1="70.5" y2="69.2" stroke="#5a8fdc" stroke-width="0.8"/><line x1="78.75" x2="78.75" y1="70.5" y2="69.7" stroke="#5a8fdc" stroke-width="0.8"/><line x1="79.50" x2="79.50" y1="70.5" y2="69.5" stroke="#5a8fdc" stroke-width="0.8"/><line x1="80.25" x2="80.25" y1="70.5" y2="70.3" stroke="#5a8fdc" stroke-width="0.8"/><line x1="81.00" x2="81.00" y1="70.5" y2="70.1" stroke="#5a8fdc" stroke-width="0.8"/><line x1="81.75" x2="81.75" y1="70.5" y2="70.4" stroke="#5a8fdc" stroke-width="0.8"/><line x1="82.50" x2="82.50" y1="70.5" y2="69.5" stroke="#5a8fdc" stroke-width="0.8"/><line x1="83.25" x2="83.25" y1="70.5" y2="69.2" stroke="#5a8fdc" stroke-width="0.8"/><line x1="84.00" x2="84.00" y1="70.5" y2="69.6" stroke="#5a8fdc" stroke-width="0.8"/><line x1="84.75" x2="84.75" y1="70.5" y2="68.3" stroke="#5a8fdc" stroke-width="0.8"/><line x1="85.50" x2="85.50" y1="70.5" y2="69.6" stroke="#5a8fdc" stroke-width="0.8"/><line x1="86.25" x2="86.25" y1="70.5" y2="69.7" stroke="#5a8fdc" stroke-width="0.8"/><line x1="87.00" x2="87.00" y1="70.5" y2="67.7" stroke="#5a8fdc" stroke-width="0.8"/><line x1="87.75" x2="87.75" y1="70.5" y2="70.0" stroke="#5a8fdc" stroke-width="0.8"/><line x1="88.50" x2="88.50" y1="70.5" y2="67.9" stroke="#5a8fdc" stroke-width="0.8"/><line x1="89.25" x2="89.25" y1="70.5" y2="68.2" stroke="#5a8fdc" stroke-width="0.8"/><line x1="90.00" x2="90.00" y1="70.5" y2="69.9" stroke="#5a8fdc" stroke-width="0.8"/><line x1="90.75" x2="90.75" y1="70.5" y2="69.3" stroke="#5a8fdc" stroke-width="0.8"/><line x1="91.50" x2="91.50" y1="70.5" y2="68.1" stroke="#5a8fdc" stroke-width="0.8"/><line x1="92.25" x2="92.25" y1="70.5" y2="69.3" stroke="#5a8fdc" stroke-width="0.8"/><line x1="93.00" x2="93.00" y1="70.5" y2="70.5" stroke="#5a8fdc" stroke-width="0.8"/><line x1="93.75" x2="93.75" y1="70.5" y2="69.2" stroke="#5a8fdc" stroke-width="0.8"/><line x1="94.50" x2="94.50" y1="70.5" y2="69.7" stroke="#5a8fdc" stroke-width="0.8"/><line x1="95.25" x2="95.25" y1="70.5" y2="68.9" stroke="#5a8fdc" stroke-width="0.8"/><line x1="96.00" x2="96.00" y1="70.5" y2="69.1" stroke="#5a8fdc" stroke-width="0.8"/><line x1="96.75" x2="96.75" y1="70.5" y2="70.5" stroke="#5a8fdc" stroke-width="0.8"/><line x1="97.50" x2="97.50" y1="70.5" y2="70.1" stroke="#5a8fdc" stroke-width="0.8"/><line x1="98.25" x2="98.25" y1="70.5" y2="70.3" stroke="#5a8fdc" stroke-width="0.8"/><line x1="99.00" x2="99.00" y1="70.5" y2="69.2" stroke="#5a8fdc" stroke-width="0.8"/><line x1="99.75" x2="99.75" y1="70.5" y2="69.0" stroke="#5a8fdc" stroke-width="0.8"/><line x1="100.50" x2="100.50" y1="70.5" y2="69.6" stroke="#5a8fdc" stroke-width="0.8"/><line x1="101.25" x2="101.25" y1="70.5" y2="68.6" stroke="#5a8fdc" stroke-width="0.8"/><line x1="102.00" x2="102.00" y1="70.5" y2="70.0" stroke="#5a8fdc" stroke-width="0.8"/><line x1="102.75" x2="102.75" y1="70.5" y2="69.5" stroke="#5a8fdc" stroke-width="0.8"/><line x1="103.50" x2="103.50" y1="70.5" y2="68.8" stroke="#5a8fdc" stroke-width="0.8"/><line x1="104.25" x2="104.25" y1="70.5" y2="69.9" stroke="#5a8fdc" stroke-width="0.8"/><line x1="105.00" x2="105.00" y1="70.5" y2="70.0" stroke="#5a8fdc" stroke-width="0.8"/><line x1="105.75" x2="105.75" y1="70.5" y2="68.7" stroke="#5a8fdc" stroke-width="0.8"/><line x1="106.50" x2="106.50" y1="70.5" y2="69.9" stroke="#5a8fdc" stroke-width="0.8"/><line x1="107.25" x2="107.25" y1="70.5" y2="69.6" stroke="#5a8fdc" stroke-width="0.8"/><line x1="108.00" x2="108.00" y1="70.5" y2="69.4" stroke="#5a8fdc" stroke-width="0.8"/><line x1="108.75" x2="108.75" y1="70.5" y2="68.4" stroke="#5a8fdc" stroke-width="0.8"/><line x1="109.50" x2="109.50" y1="70.5" y2="68.4" stroke="#5a8fdc" stroke-width="0.8"/><line x1="110.25" x2="110.25" y1="70.5" y2="69.8" stroke="#5a8fdc" stroke-width="0.8"/><line x1="111.00" x2="111.00" y1="70.5" y2="69.5" stroke="#5a8fdc" stroke-width="0.8"/><line x1="111.75" x2="111.75" y1="70.5" y2="69.2" stroke="#5a8fdc" stroke-width="0.8"/><line x1="112.50" x2="112.50" y1="70.5" y2="67.9" stroke="#5a8fdc" stroke-width="0.8"/><line x1="113.25" x2="113.25" y1="70.5" y2="69.9" stroke="#5a8fdc" stroke-width="0.8"/><line x1="114.00" x2="114.00" y1="70.5" y2="69.3" stroke="#5a8fdc" stroke-width="0.8"/><line x1="114.75" x2="114.75" y1="70.5" y2="69.1" stroke="#5a8fdc" stroke-width="0.8"/><line x1="115.50" x2="115.50" y1="70.5" y2="68.1" stroke="#5a8fdc" stroke-width="0.8"/><line x1="116.25" x2="116.25" y1="70.5" y2="69.2" stroke="#5a8fdc" stroke-width="0.8"/><line x1="117.00" x2="117.00" y1="70.5" y2="69.5" stroke="#5a8fdc" stroke-width="0.8"/><line x1="117.75" x2="117.75" y1="70.5" y2="69.7" stroke="#5a8fdc" stroke-width="0.8"/><line x1="118.50" x2="118.50" y1="70.5" y2="68.7" stroke="#5a8fdc" stroke-width="0.8"/><line x1="119.25" x2="119.25" y1="70.5" y2="70.1" stroke="#5a8fdc" stroke-width="0.8"/><line x1="120.00" x2="120.00" y1="70.5" y2="70.4" stroke="#5a8fdc" stroke-width="0.8"/><line x1="120.75" x2="120.75" y1="70.5" y2="70.2" stroke="#5a8fdc" stroke-width="0.8"/><line x1="121.50" x2="121.50" y1="70.5" y2="70.2" stroke="#5a8fdc" stroke-width="0.8"/><line x1="122.25" x2="122.25" y1="70.5" y2="68.0" stroke="#5a8fdc" stroke-width="0.8"/><line x1="123.00" x2="123.00" y1="70.5" y2="68.0" stroke="#5a8fdc" stroke-width="0.8"/><line x1="123.75" x2="123.75" y1="70.5" y2="69.2" stroke="#5a8fdc" stroke-width="0.8"/><line x1="124.50" x2="124.50" y1="70.5" y2="69.6" stroke="#5a8fdc" stroke-width="0.8"/><line x1="125.25" x2="125.25" y1="70.5" y2="70.4" stroke="#5a8fdc" stroke-width="0.8"/><line x1="126.00" x2="126.00" y1="70.5" y2="69.7" stroke="#5a8fdc" stroke-width="0.8"/><line x1="126.75" x2="126.75" y1="70.5" y2="70.3" stroke="#5a8fdc" stroke-width="0.8"/><line x1="127.50" x2="127.50" y1="70.5" y2="69.1" stroke="#5a8fdc" stroke-width="0.8"/><line x1="128.25" x2="128.25" y1="70.5" y2="69.5" stroke="#5a8fdc" stroke-width="0.8"/><line x1="129.00" x2="129.00" y1="70.5" y2="69.3" stroke="#5a8fdc" stroke-width="0.8"/><line x1="129.75" x2="129.75" y1="70.5" y2="70.0" stroke="#5a8fdc" stroke-width="0.8"/><line x1="130.50" x2="130.50" y1="70.5" y2="68.7" stroke="#5a8fdc" stroke-width="0.8"/><line x1="131.25" x2="131.25" y1="70.5" y2="69.9" stroke="#5a8fdc" stroke-width="0.8"/><line x1="132.00" x2="132.00" y1="70.5" y2="69.3" stroke="#5a8fdc" stroke-width="0.8"/><line x1="132.75" x2="132.75" y1="70.5" y2="69.2" stroke="#5a8fdc" stroke-width="0.8"/><line x1="133.50" x2="133.50" y1="70.5" y2="69.0" stroke="#5a8fdc" stroke-width="0.8"/><line x1="134.25" x2="134.25" y1="70.5" y2="69.9" stroke="#5a8fdc" stroke-width="0.8"/><line x1="135.00" x2="135.00" y1="70.5" y2="70.3" stroke="#5a8fdc" stroke-width="0.8"/><line x1="135.75" x2="135.75" y1="70.5" y2="69.4" stroke="#5a8fdc" stroke-width="0.8"/><line x1="136.50" x2="136.50" y1="70.5" y2="69.7" stroke="#5a8fdc" stroke-width="0.8"/><line x1="137.25" x2="137.25" y1="70.5" y2="68.6" stroke="#5a8fdc" stroke-width="0.8"/><line x1="138.00" x2="138.00" y1="70.5" y2="70.3" stroke="#5a8fdc" stroke-width="0.8"/></svg>
<div class="a" style="left:760px;top:483px;width:144px;height:17px;background:#f4f5f9"></div>
<div id="cf760365" class="c t10 k" style="left:832px;top:489px">3,012 Trades</div>
<div class="hdr" style="left:910px;top:365px;width:144px;height:19px;border-bottom:1px solid #5f72a3"></div>
<div class="info" style="left:1039px;top:369px"></div>
<div class="a" style="left:910px;top:384px;width:144px;height:99px;background:#fff"></div>
<svg class="a" style="left:910px;top:384px" width="144" height="99"><line x1="0" x2="144" y1="24.5" y2="24.5" stroke="#e4e4e4" stroke-width="1"/><line x1="0" x2="144" y1="41.5" y2="41.5" stroke="#e4e4e4" stroke-width="1"/><line x1="0" x2="144" y1="58.5" y2="58.5" stroke="#e4e4e4" stroke-width="1"/><line x1="0" x2="144" y1="75.5" y2="75.5" stroke="#e4e4e4" stroke-width="1"/><line x1="0" x2="144" y1="93.5" y2="93.5" stroke="#c4c4c4" stroke-width="1"/><line x1="0" x2="144" y1="98.5" y2="98.5" stroke="#c6cad4" stroke-width="1"/><line x1="32.5" x2="32.5" y1="95.5" y2="99" stroke="#9aa6c0" stroke-width="1"/><line x1="69.5" x2="69.5" y1="95.5" y2="99" stroke="#9aa6c0" stroke-width="1"/><line x1="106.5" x2="106.5" y1="95.5" y2="99" stroke="#9aa6c0" stroke-width="1"/><line x1="143.5" x2="143.5" y1="95.5" y2="99" stroke="#9aa6c0" stroke-width="1"/><path d="M6 93.5 L9.8 70.8 L19.5 67.5 L32.5 61.0 L34.7 57.8 L41.2 50.2 L43.3 49.1 L49.8 48.0 L56.4 50.2 L65.0 48.0 L69.4 45.4 L74.8 48.0 L82.4 41.5 L85.6 48.0 L91.0 37.2 L97.5 33.9 L106.2 27.4 L110.5 26.3 L118.1 20.9 L123.5 13.3 L126.8 29.6 L131.1 11.2 L136.5 5.8 L144.0 5.8 L144 93.5Z" fill="#2a72cc"/><rect x="6" y="70" width="4" height="24" fill="#15284a"/><path d="M8.2 71.9 L11.9 70.8 L16.3 71.4 L20.6 67.1 L24.3 65.8 L28.2 64.9 L32.5 63.2 L36.4 59.3 L40.1 58.9 L44.4 56.3 L48.1 54.5 L52.0 53.4 L55.9 52.4 L60.3 51.3 L64.6 50.6 L68.9 51.3 L72.2 52.8 L75.9 46.9 L80.2 46.9 L84.1 45.4 L88.4 42.6 L92.1 41.5 L96.4 38.3 L100.1 37.2 L104.0 35.7 L107.9 35.4 L112.3 33.9 L116.0 28.5 L120.3 24.2 L124.0 16.6 L128.3 24.6 L132.6 13.3 L136.5 7.9 L140.5 5.0" fill="none" stroke="#e0b080" stroke-width="1"/><circle cx="8.2" cy="71.9" r="2.3" fill="#d99a5a"/><circle cx="11.9" cy="70.8" r="2.3" fill="#d99a5a"/><circle cx="16.3" cy="71.4" r="2.3" fill="#d99a5a"/><circle cx="20.6" cy="67.1" r="2.3" fill="#d99a5a"/><circle cx="24.3" cy="65.8" r="2.3" fill="#d99a5a"/><circle cx="28.2" cy="64.9" r="2.3" fill="#d99a5a"/><circle cx="32.5" cy="63.2" r="2.3" fill="#d99a5a"/><circle cx="36.4" cy="59.3" r="2.3" fill="#d99a5a"/><circle cx="40.1" cy="58.9" r="2.3" fill="#d99a5a"/><circle cx="44.4" cy="56.3" r="2.3" fill="#d99a5a"/><circle cx="48.1" cy="54.5" r="2.3" fill="#d99a5a"/><circle cx="52.0" cy="53.4" r="2.3" fill="#d99a5a"/><circle cx="55.9" cy="52.4" r="2.3" fill="#d99a5a"/><circle cx="60.3" cy="51.3" r="2.3" fill="#d99a5a"/><circle cx="64.6" cy="50.6" r="2.3" fill="#d99a5a"/><circle cx="68.9" cy="51.3" r="2.3" fill="#d99a5a"/><circle cx="72.2" cy="52.8" r="2.3" fill="#d99a5a"/><circle cx="75.9" cy="46.9" r="2.3" fill="#d99a5a"/><circle cx="80.2" cy="46.9" r="2.3" fill="#d99a5a"/><circle cx="84.1" cy="45.4" r="2.3" fill="#d99a5a"/><circle cx="88.4" cy="42.6" r="2.3" fill="#d99a5a"/><circle cx="92.1" cy="41.5" r="2.3" fill="#d99a5a"/><circle cx="96.4" cy="38.3" r="2.3" fill="#d99a5a"/><circle cx="100.1" cy="37.2" r="2.3" fill="#d99a5a"/><circle cx="104.0" cy="35.7" r="2.3" fill="#d99a5a"/><circle cx="107.9" cy="35.4" r="2.3" fill="#d99a5a"/><circle cx="112.3" cy="33.9" r="2.3" fill="#d99a5a"/><circle cx="116.0" cy="28.5" r="2.3" fill="#d99a5a"/><circle cx="120.3" cy="24.2" r="2.3" fill="#d99a5a"/><circle cx="124.0" cy="16.6" r="2.3" fill="#d99a5a"/><circle cx="128.3" cy="24.6" r="2.3" fill="#d99a5a"/><circle cx="132.6" cy="13.3" r="2.3" fill="#d99a5a"/><circle cx="136.5" cy="7.9" r="2.3" fill="#d99a5a"/><circle cx="140.5" cy="5.0" r="2.3" fill="#d99a5a"/></svg>
<div class="a" style="left:910px;top:483px;width:144px;height:17px;background:#f4f5f9"></div>
<div id="cf910365" class="c t10 k" style="left:982px;top:489px">33 Weeks</div>
<div class="a" style="left:917px;top:370px;width:10px;height:10px;background:#2a6fd0;border:1px solid #e8ecf6"></div>
<div id="lgeq" class="a t12" style="left:929px;top:369px;color:#e6eaf4">Equity</div>
<div class="a" style="left:968px;top:370px;width:10px;height:10px;background:#d99a5a;border:1px solid #e8ecf6"></div>
<div id="lgbal" class="a t12" style="left:981px;top:369px;color:#e6eaf4">Balance</div>
<svg class="a" style="left:0;top:0" width="1061" height="554">
<line x1="441.5" y1="63" x2="372" y2="103.5" stroke="#f40000" stroke-width="3.2" stroke-linecap="round"/>
<path d="M365.5 107.5 L374.5 97.5 L379.5 105 Z" fill="#f40000"/>
<line x1="366" y1="108" x2="145" y2="266" stroke="#f40000" stroke-width="3.2" stroke-linecap="round"/>
<path d="M137 273 L146 261 L151.5 268.5 Z" fill="#f40000"/>
</svg>
<div class="a" style="left:1049px;top:0;width:12px;height:554px;background:#f0f0f0"></div>
<div class="a" style="left:1049px;top:45px;width:12px;height:401px;background:#cdcdcd"></div>
</body></html>
